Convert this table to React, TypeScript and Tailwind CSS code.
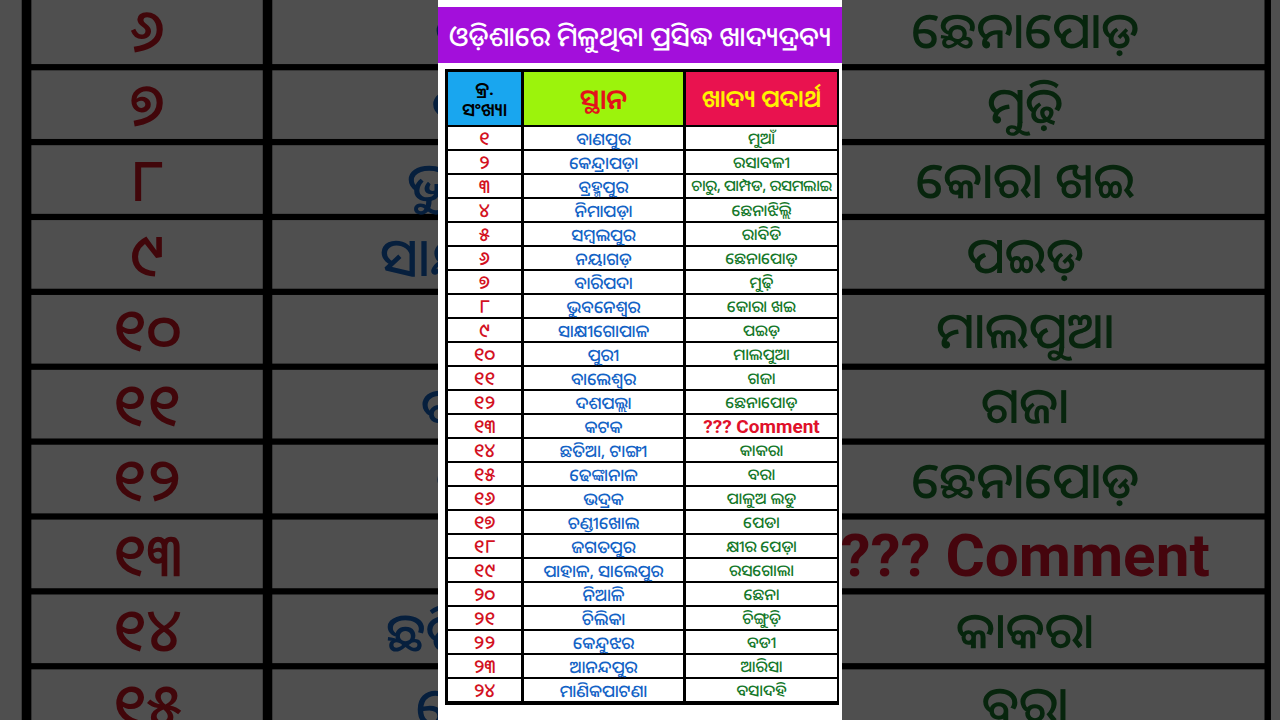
import React from 'react';

type Row = { no: string; place: string; food: string; comment?: boolean; small?: boolean };

const rows: Row[] = [
  { no: '୧', place: 'ବାଣପୁର', food: 'ମୁଆଁ' },
  { no: '୨', place: 'କେନ୍ଦ୍ରାପଡ଼ା', food: 'ରସାବଳୀ' },
  { no: '୩', place: 'ବ୍ରହ୍ମପୁର', food: 'ଚାରୁ, ପାମ୍ପଡ, ରସମଲାଇ', small: true },
  { no: '୪', place: 'ନିମାପଡ଼ା', food: 'ଛେନାଝିଲ୍ଲି' },
  { no: '୫', place: 'ସମ୍ବଲପୁର', food: 'ରାବିଡି' },
  { no: '୬', place: 'ନୟାଗଡ଼', food: 'ଛେନାପୋଡ଼' },
  { no: '୭', place: 'ବାରିପଦା', food: 'ମୁଢ଼ି' },
  { no: '୮', place: 'ଭୁବନେଶ୍ୱର', food: 'କୋରା ଖଇ' },
  { no: '୯', place: 'ସାକ୍ଷୀଗୋପାଳ', food: 'ପଇଡ଼' },
  { no: '୧୦', place: 'ପୁରୀ', food: 'ମାଲପୁଆ' },
  { no: '୧୧', place: 'ବାଲେଶ୍ୱର', food: 'ଗଜା' },
  { no: '୧୨', place: 'ଦଶପଲ୍ଲା', food: 'ଛେନାପୋଡ଼' },
  { no: '୧୩', place: 'କଟକ', food: '??? Comment', comment: true },
  { no: '୧୪', place: 'ଛତିଆ, ଟାଙ୍ଗୀ', food: 'କାକରା' },
  { no: '୧୫', place: 'ଢେଙ୍କାନାଳ', food: 'ବରା' },
  { no: '୧୬', place: 'ଭଦ୍ରକ', food: 'ପାଳୁଅ ଲଡୁ' },
  { no: '୧୭', place: 'ଚଣ୍ଡୀଖୋଲ', food: 'ପେଡା' },
  { no: '୧୮', place: 'ଜଗତପୁର', food: 'କ୍ଷୀର ପେଡ଼ା' },
  { no: '୧୯', place: 'ପାହାଳ, ସାଲେପୁର', food: 'ରସଗୋଲା' },
  { no: '୨୦', place: 'ନିଆଳି', food: 'ଛେନା' },
  { no: '୨୧', place: 'ଚିଲିକା', food: 'ଚିଙ୍ଗୁଡ଼ି' },
  { no: '୨୨', place: 'କେନ୍ଦୁଝର', food: 'ବଡୀ' },
  { no: '୨୩', place: 'ଆନନ୍ଦପୁର', food: 'ଆରିସା' },
  { no: '୨୪', place: 'ମାଣିକପାଟଣା', food: 'ବସାଦହି' },
];

const font = { fontFamily: '"Noto Sans Oriya", "Noto Sans", "DejaVu Sans", sans-serif' };

const Panel: React.FC = () => (
  <div className="flex flex-col w-[404px] h-[720px] bg-white pt-[7px]" style={font}>
    {/* Title banner */}
    <div className="flex items-center justify-center h-[56px] bg-[#a30fdb]">
      <p className="text-[27px] font-medium text-white leading-none whitespace-nowrap">ଓଡ଼ିଶାରେ ମିଳୁଥିବା ପ୍ରସିଦ୍ଧ ଖାଦ୍ୟଦ୍ରବ୍ୟ</p>
    </div>

    {/* Table */}
    <div className="mt-[6px] ml-[7px] w-[394px] border border-black border-b-2 border-r-2 bg-black p-[2px] grid grid-cols-[73px_159px_151px] gap-x-[3px] gap-y-[2px]">
      <div className="h-[53px] bg-[#19a6ef] flex flex-col items-center justify-center leading-[21px] text-[18px] font-semibold text-black">
        <span>କ୍ର.</span>
        <span>ସଂଖ୍ୟା</span>
      </div>
      <div className="h-[53px] bg-[#9cf30c] flex items-center justify-center text-[28px] font-semibold text-[#e3111b] leading-none pb-[2px]">
        ସ୍ଥାନ
      </div>
      <div className="h-[53px] bg-[#e9124f] flex items-center justify-center text-[24px] font-semibold text-[#fff200] leading-none pb-[2px]">
        ଖାଦ୍ୟ ପଦାର୍ଥ
      </div>

      {rows.map((r) => (
        <React.Fragment key={r.no}>
          <div className="h-[22px] bg-white flex items-center justify-center text-[19px] font-medium text-[#d3121f] leading-none">
            {r.no}
          </div>
          <div className="h-[22px] bg-white flex items-center justify-center text-[17px] font-medium text-[#1363c6] leading-none whitespace-nowrap">
            {r.place}
          </div>
          {r.comment ? (
            <div
              className="h-[22px] bg-white flex items-center justify-center text-[19px] font-bold text-[#e0102a] leading-none"
              style={{ fontFamily: 'Roboto, "Liberation Sans", sans-serif' }}
            >
              {r.food}
            </div>
          ) : (
            <div
              className={`h-[22px] bg-white flex items-center justify-center font-medium text-[#15782a] leading-none whitespace-nowrap ${
                r.small ? 'text-[15.5px] tracking-[-0.3px]' : 'text-[16px]'
              }`}
            >
              {r.food}
            </div>
          )}
        </React.Fragment>
      ))}
    </div>
  </div>
);

export default function App() {
  return (
    <div className="relative w-[1280px] h-[720px] overflow-hidden bg-[#4f4f4f]">
      {/* Dimmed enlarged copy behind, as in a vertical video frame */}
      <div className="absolute inset-0 flex justify-center items-center brightness-[0.31] blur-[0.6px] -translate-y-[12px]">
        <div className="shrink-0 scale-x-[3.17] scale-y-[3.12] origin-center">
          <Panel />
        </div>
      </div>

      <div className="relative flex justify-center">
        <Panel />
      </div>
    </div>
  );
}
